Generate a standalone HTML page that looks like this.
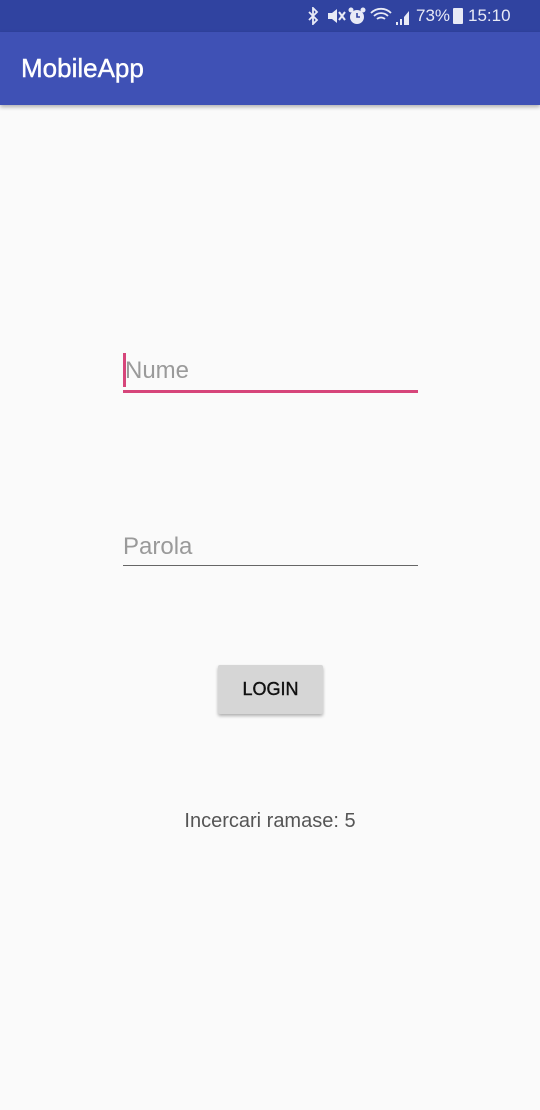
<!DOCTYPE html>
<html><head><meta charset="utf-8"><style>
*{margin:0;padding:0;box-sizing:border-box}
body{width:540px;height:1110px;background:#fafafa;font-family:"Liberation Sans",Roboto,sans-serif;position:relative;overflow:hidden}
.sb{position:absolute;top:0;left:0;width:540px;height:32px;background:#3043a0;color:#e8eaf6}
.ab{position:absolute;top:32px;left:0;width:540px;height:73px;background:#3f51b5;box-shadow:0 2px 4px rgba(0,0,0,.3)}
.ab span{position:absolute;left:21px;top:21px;color:#fff;font-size:26px;font-weight:500;-webkit-text-stroke:0.4px #fff}
.t{position:absolute;font-size:24px;color:#9a9a9a}
.line{position:absolute;left:123px;width:295px}
.btn{position:absolute;left:218px;top:665px;width:105px;height:49px;background:#d6d6d6;border-radius:2px;box-shadow:0 2px 3px rgba(0,0,0,.3);font-size:18px;font-weight:500;color:#111;text-align:center;line-height:49px;-webkit-text-stroke:0.4px #111}
</style></head><body>
<div class="sb">
<svg style="position:absolute;left:306px;top:7px" width="14" height="18" viewBox="0 0 14 18"><path d="M3 5l8 8-4 4V1l4 4-8 8" stroke="#e8eaf6" stroke-width="1.8" fill="none"/></svg>
<svg style="position:absolute;left:326px;top:7px" width="20" height="18" viewBox="0 0 20 18"><path d="M2 6h4l5-4v14l-5-4H2z" fill="#e8eaf6"/><path d="M13 5l6 8M19 5l-6 8" stroke="#e8eaf6" stroke-width="2"/></svg>
<svg style="position:absolute;left:348px;top:6px" width="18" height="20" viewBox="0 0 18 20"><circle cx="9" cy="11" r="7" fill="#e8eaf6"/><path d="M9 7v4h3" stroke="#3043a0" stroke-width="1.6" fill="none"/><circle cx="3" cy="4" r="2.5" fill="#e8eaf6"/><circle cx="15" cy="4" r="2.5" fill="#e8eaf6"/></svg>
<svg style="position:absolute;left:370px;top:7px" width="40" height="18" viewBox="0 0 40 18"><path d="M1 6a14 14 0 0 1 20 0M4 9a10 10 0 0 1 14 0M7 12a6 6 0 0 1 8 0" stroke="#e8eaf6" stroke-width="1.8" fill="none"/><path d="M26 18h2v-3h-2zM30 18h2v-6h-2zM34 18h5V4l-5 6z" fill="#e8eaf6"/></svg>
<span style="position:absolute;left:416px;top:6px;font-size:17px">73%</span>
<div style="position:absolute;left:453px;top:8px;width:10px;height:16px;background:#e8eaf6;border-radius:1px"></div>
<span style="position:absolute;left:468px;top:6px;font-size:17px">15:10</span>
</div>
<div class="ab"><span>MobileApp</span></div>
<div style="position:absolute;left:123px;top:353px;width:3px;height:34px;background:#d6457a"></div>
<div class="t" style="left:125px;top:357px">Nume</div>
<div class="line" style="top:390px;height:3px;background:#d6457a"></div>
<div class="t" style="left:123px;top:533px">Parola</div>
<div class="line" style="top:565px;height:1px;background:#666"></div>
<div class="btn">LOGIN</div>
<div style="position:absolute;left:0;width:540px;top:810px;text-align:center;font-size:20px;color:#555">Incercari ramase: 5</div>
</body></html>
